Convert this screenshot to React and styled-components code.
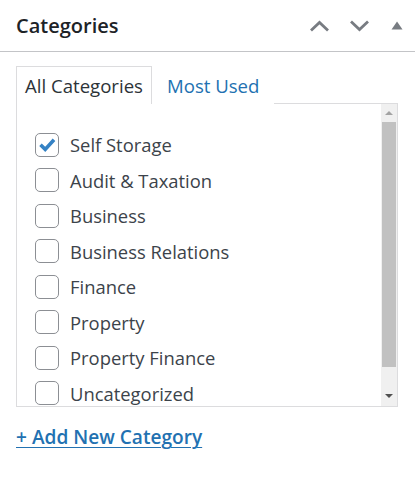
import React from "react";
import styled, { createGlobalStyle } from "styled-components";

const GlobalStyle = createGlobalStyle`
  html, body { margin: 0; padding: 0; background: #ffffff; }
  body { font-family: "Open Sans", "Noto Sans", sans-serif; }
  * { box-sizing: border-box; }
`;

const Box = styled.div`
  width: 415px;
  height: 479px;
  background: #fff;
`;

const Header = styled.div`
  height: 52px;
  display: flex;
  align-items: center;
  justify-content: space-between;
  padding: 0 0 0 16px;
  border-bottom: 1px solid #c3c4c7;
`;

const Title = styled.h2`
  margin: 0;
  font-size: 20px;
  font-weight: 600;
  color: #1d2327;
  line-height: 1;
`;

const Actions = styled.div`
  display: flex;
  align-items: center;
`;

const IconBtn = styled.span`
  width: ${(p) => p.$w}px;
  height: 30px;
  display: flex;
  align-items: center;
  justify-content: center;
  color: #787c82;
`;

const Body = styled.div`
  padding: 14px 17px 0 16px;
`;

const Tabs = styled.ul`
  list-style: none;
  margin: 0 0 -1px 0;
  padding: 0;
  display: flex;
  align-items: stretch;
  height: 38px;
  position: relative;
  z-index: 1;
`;

const Tab = styled.li`
  display: flex;
  align-items: center;
  font-size: 18.6px;
  padding: ${(p) => (p.$active ? "0 8px 0 8px" : "0 14px")};
  border: 1px solid ${(p) => (p.$active ? "#dcdcde" : "transparent")};
  border-bottom: none;
  background: #fff;
  color: ${(p) => (p.$active ? "#2c3338" : "#2271b1")};
`;

const Panel = styled.div`
  height: 304px;
  border: 1px solid #dcdcde;
  display: flex;
  overflow: hidden;
`;

const List = styled.ul`
  flex: 1;
  list-style: none;
  margin: 0;
  padding: 23px 0 0 18px;
  overflow: hidden;
`;

const Row = styled.li`
  height: 35.5px;
  display: flex;
  align-items: center;
  gap: 11px;
  font-size: 18.4px;
  color: #3c434a;
  white-space: nowrap;
`;

const Check = styled.span`
  width: 24px;
  height: 24px;
  flex: 0 0 24px;
  border: 1px solid #8c8f94;
  border-radius: 5px;
  background: #fff;
  display: flex;
  align-items: center;
  justify-content: center;
`;

const ScrollBar = styled.div`
  width: 16px;
  background: #f0f0f0;
  display: flex;
  flex-direction: column;
`;

const ArrowBtn = styled.div`
  height: ${(p) => p.$h}px;
  display: flex;
  align-items: center;
  justify-content: center;
`;

const Tri = styled.span`
  width: 0;
  height: 0;
  border-left: 4px solid transparent;
  border-right: 4px solid transparent;
  ${(p) =>
    p.$up
      ? `border-bottom: 4px solid #a3a3a3;`
      : `border-top: 4px solid #505050;`}
`;

const Track = styled.div`
  flex: 1;
  display: flex;
  flex-direction: column;
  padding: 1px 1px 0 1px;
`;

const Thumb = styled.div`
  height: 245px;
  background: #c1c1c1;
`;

const AddLink = styled.a`
  display: inline-block;
  margin: 17px 0 0 16px;
  font-size: 19.1px;
  font-weight: 600;
  color: #2271b1;
  text-decoration: underline;
  text-underline-offset: 3px;
  text-decoration-thickness: 1px;
`;

const ChevronUp = () => (
  <svg width="21" height="12" viewBox="0 0 21 12">
    <path d="M2 10.5 L10.5 2.5 L19 10.5" fill="none" stroke="currentColor" strokeWidth="2.8" />
  </svg>
);

const ChevronDown = () => (
  <svg width="21" height="12" viewBox="0 0 21 12">
    <path d="M2 1.5 L10.5 9.5 L19 1.5" fill="none" stroke="currentColor" strokeWidth="2.8" />
  </svg>
);

const Triangle = () => (
  <svg width="12" height="9" viewBox="0 0 12 9">
    <path d="M6 0.5 L11.5 8.5 L0.5 8.5 Z" fill="currentColor" />
  </svg>
);

const CheckMark = () => (
  <svg width="18" height="16" viewBox="0 0 18 16">
    <path d="M2.5 7.8 L7.2 12.4 L16 2.8" fill="none" stroke="#3582c4" strokeWidth="3.6" />
  </svg>
);

const items = [
  { name: "Self Storage", checked: true },
  { name: "Audit & Taxation" },
  { name: "Business" },
  { name: "Business Relations" },
  { name: "Finance" },
  { name: "Property" },
  { name: "Property Finance" },
  { name: "Uncategorized" },
];

export default function App() {
  return (
    <Box>
      <GlobalStyle />
      <Header>
        <Title>Categories</Title>
        <Actions>
          <IconBtn $w={39}><ChevronUp /></IconBtn>
          <IconBtn $w={40}><ChevronDown /></IconBtn>
          <IconBtn $w={36}><Triangle /></IconBtn>
        </Actions>
      </Header>
      <Body>
        <Tabs>
          <Tab $active>All Categories</Tab>
          <Tab>Most Used</Tab>
        </Tabs>
        <Panel>
          <List>
            {items.map((it) => (
              <Row key={it.name}>
                <Check>{it.checked && <CheckMark />}</Check>
                {it.name}
              </Row>
            ))}
          </List>
          <ScrollBar>
            <ArrowBtn $h={17}><Tri $up /></ArrowBtn>
            <Track><Thumb /></Track>
            <ArrowBtn $h={20}><Tri /></ArrowBtn>
          </ScrollBar>
        </Panel>
      </Body>
      <AddLink href="#">+ Add New Category</AddLink>
    </Box>
  );
}
